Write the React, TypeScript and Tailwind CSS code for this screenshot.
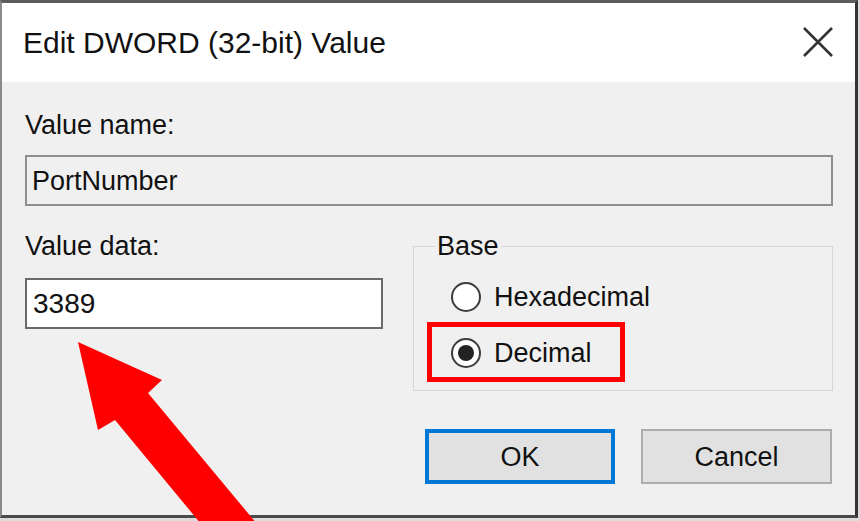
import React from "react";

const FONT = { fontFamily: '"Liberation Sans", Arial, sans-serif' };

function Radio({ checked }: { checked?: boolean }) {
  return (
    <span className="flex h-[30px] w-[30px] shrink-0 items-center justify-center rounded-full border-[2px] border-[#3c3c3c] bg-white">
      {checked && <span className="h-[16px] w-[16px] rounded-full bg-[#222]" />}
    </span>
  );
}

export default function App() {
  return (
    <div
      className="relative h-[521px] w-[860px] overflow-hidden bg-[#dcdcdc] text-black"
      style={FONT}
    >
      {/* dialog window */}
      <div className="flex h-[518px] w-[858px] flex-col border-t-[3px] border-r-[3px] border-b-[3px] border-l-[2px] border-t-[#5c5c5c] border-r-[#333] border-b-[#4a4a4a] border-l-[#8a8a8a]">
        {/* title bar */}
        <div className="flex h-[79px] shrink-0 items-center justify-between bg-white pl-[21px] pr-[22px]">
          <span className="text-[30px] leading-[34px] text-[#111]">Edit DWORD (32-bit) Value</span>
          <svg width="30" height="30" viewBox="0 0 30 30" className="-mt-[2px]">
            <path d="M1 1 L29 29 M29 1 L1 29" stroke="#333" strokeWidth="2.6" />
          </svg>
        </div>

        {/* body */}
        <div className="flex flex-1 flex-col bg-[#f0f0f0] pt-[28px] pl-[23px] pr-[22px] text-[27px] leading-[30px] text-[#111]">
          <span>Value name:</span>
          <div className="mt-[15px] flex h-[51px] items-center border-[2px] border-[#8f8f8f] bg-[#f0f0f0] pl-[5px]">
            PortNumber
          </div>

          <div className="mt-[25px] flex gap-[30px]">
            <div className="flex w-[358px] flex-col">
              <span>Value data:</span>
              <div className="mt-[17px] flex h-[51px] items-center border-[2px] border-[#6a6a6a] bg-white pl-[6px] text-[28px]">
                3389
              </div>
            </div>

            <fieldset className="h-[160px] flex-1 border border-[#d6d6d6]">
              <legend className="ml-[21px] px-[2px]">Base</legend>
              <div className="flex flex-col pt-[21px] pl-[13px]">
                <div className="flex items-center gap-[13px] pl-[24px]">
                  <Radio />
                  <span>Hexadecimal</span>
                </div>
                <div className="mt-[10px] flex w-fit items-center gap-[13px] border-[5px] border-[#ff0000] pt-[11px] pb-[9px] pl-[19px] pr-[28px]">
                  <Radio checked />
                  <span>Decimal</span>
                </div>
              </div>
            </fieldset>
          </div>

          <div className="mt-[38px] flex justify-end gap-[26px] pr-[1px]">
            <button className="flex h-[55px] w-[190px] items-center justify-center border-[4px] border-[#0078d7] bg-[#e1e1e1] text-[27px]">
              OK
            </button>
            <button className="flex h-[55px] w-[191px] items-center justify-center border-[2px] border-[#adadad] bg-[#e1e1e1] text-[27px]">
              Cancel
            </button>
          </div>
        </div>
      </div>

      {/* red annotation arrow */}
      <svg
        className="pointer-events-none absolute top-0 left-0"
        width="860"
        height="521"
        viewBox="0 0 860 521"
      >
        <polygon
          points="78,342 162,380 148,393 262,530 206,530 115,420 98,430"
          fill="#ff0000"
        />
      </svg>
    </div>
  );
}
